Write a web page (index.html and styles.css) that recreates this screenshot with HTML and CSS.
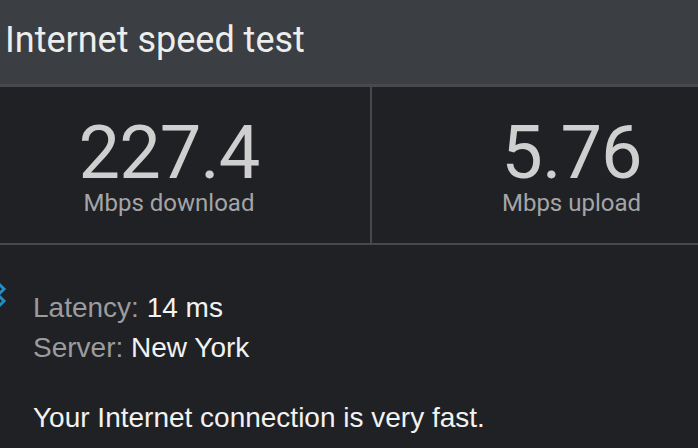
FILE: index.html
```html
<!DOCTYPE html>
<html lang="en">

<head>
  <meta charset="UTF-8">
  <meta name="viewport" content="width=device-width, initial-scale=1.0">
  <title>Internet speed test</title>
  <link rel="stylesheet" href="styles.css">
</head>

<body>
  <header class="top">
    <h1 class="title">Internet speed test</h1>
  </header>

  <section class="stats">
    <div class="stat stat-down">
      <div class="stat-num">227.4</div>
      <div class="stat-label">Mbps download</div>
    </div>
    <div class="stat stat-up">
      <div class="stat-num">5.76</div>
      <div class="stat-label">Mbps upload</div>
    </div>
  </section>

  <section class="details">
    <!-- arrow peeking in from the left edge -->
    <svg class="edge-arrow" width="8" height="30" viewBox="0 0 8 30">
      <path d="M-2 2 L4 8 L-2 14" fill="none" stroke="#1f8fc4" stroke-width="3" />
      <path d="M-2 14 L4 20 L-2 26" fill="none" stroke="#1f8fc4" stroke-width="3" />
    </svg>
    <p class="row"><span class="key">Latency:</span> 14 ms</p>
    <p class="row"><span class="key">Server:</span> New York</p>
    <p class="verdict">Your Internet connection is very fast.</p>
  </section>
</body>

</html>
```

FILE: styles.css
```css
/* page */
html,
body {
  margin: 0;
  height: 100%;
  background: #202125;
  overflow: hidden;
}

/* header bar */
.top {
  height: 87px;
  background: #3b3e42;
  border-bottom: 3px solid #47494d;
  box-sizing: border-box;
  display: flex;
  align-items: center;
  padding-left: 5px;
}

.title {
  margin: 0;
  font-family: Roboto, "Liberation Sans", sans-serif;
  font-weight: 400;
  font-size: 36px;
  line-height: 42px;
  color: #eceded;
  padding-bottom: 4px;
}

/* download / upload numbers */
.stats {
  display: grid;
  grid-template-columns: 372px 1fr;
  height: 158px;
  border-bottom: 2px solid #46484c;
  box-sizing: border-box;
}

.stat {
  display: flex;
  flex-direction: column;
  align-items: center;
  padding-top: 29px;
  font-family: Roboto, "Liberation Sans", sans-serif;
}

.stat-down {
  border-right: 2px solid #46484c;
  padding-right: 32px;
}

.stat-up {
  padding-left: 73px;
}

.stat-num {
  font-size: 74px;
  line-height: 74px;
  color: #cfcfd0;
  letter-spacing: -1px;
}

.stat-label {
  font-size: 24px;
  line-height: 26px;
  color: #a4a5a7;
}

/* latency, server, verdict */
.details {
  position: relative;
  padding: 43px 0 0 33px;
  font-family: "Liberation Sans", Arial, sans-serif;
  font-size: 28px;
  color: #f2f2f2;
}

.edge-arrow {
  position: absolute;
  left: 0;
  top: 36px;
}

.row {
  margin: 0;
  line-height: 40px;
}

.key {
  color: #9c9c9e;
}

.verdict {
  margin: 30px 0 0;
  line-height: 40px;
}
```
